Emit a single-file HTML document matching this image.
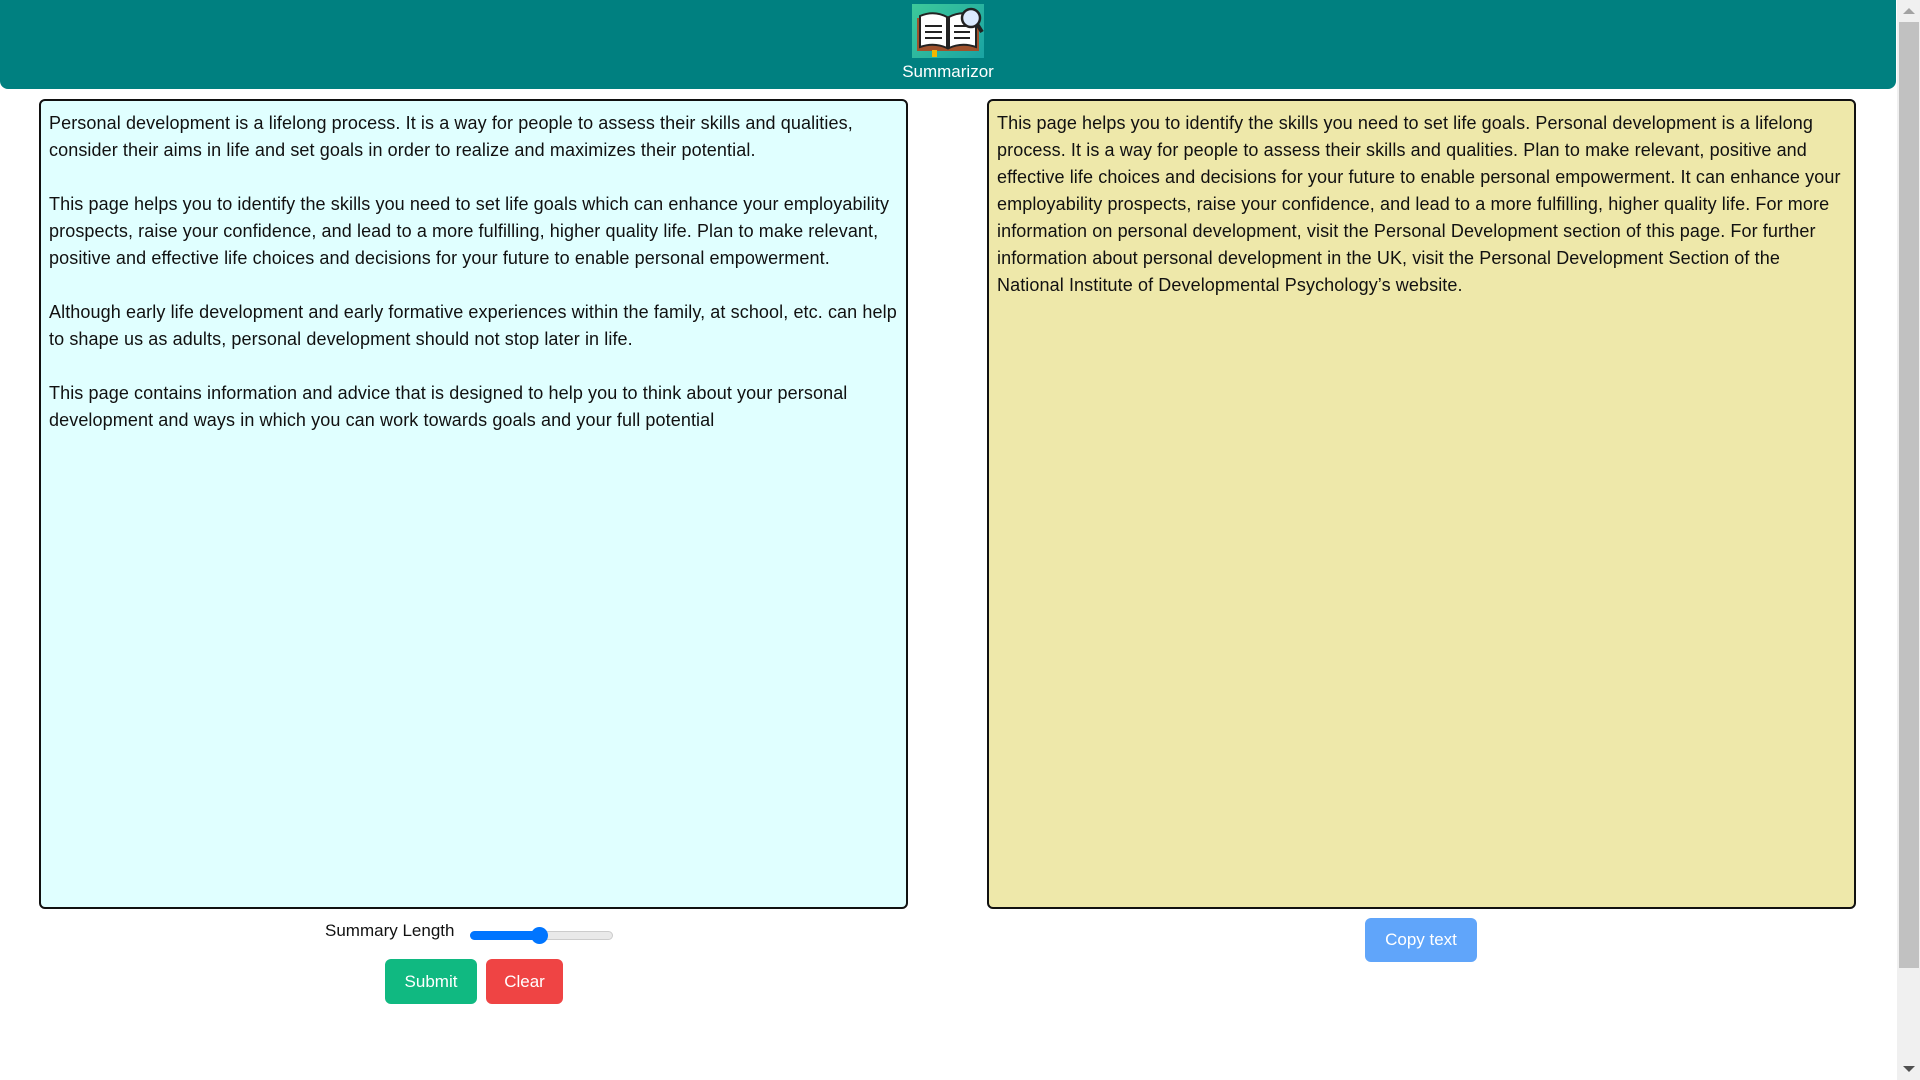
<!DOCTYPE html>
<html><head><meta charset="utf-8"><style>
html,body{margin:0;padding:0;width:1920px;height:1080px;overflow:hidden;background:#fff;font-family:"Liberation Sans",sans-serif}
.sb{position:absolute;right:0;top:0;width:23px;height:1080px;background:#f0f0f0}
.sb .th{position:absolute;left:2px;right:1px;top:22px;height:946px;background:#c1c1c1}
.sb .up,.sb .dn{position:absolute;left:6px;width:0;height:0;border-left:6px solid transparent;border-right:6px solid transparent}
.sb .up{top:8px;border-bottom:6px solid #a3a3a3}
.sb .dn{bottom:8px;border-top:6px solid #505050}
header{position:absolute;left:0;top:0;width:1896px;height:89px;background:#008080;border-radius:0 0 8px 8px}
.logo{position:absolute;left:912px;top:4px;width:72px;height:54px;background:linear-gradient(135deg,#3dc99a,#1aa3a3)}
.title{position:absolute;left:0;width:1896px;top:62px;text-align:center;color:#fff;font-size:17px}
.ta{position:absolute;box-sizing:border-box;border:2px solid #111;border-radius:6px;padding:9px 8px;font-size:18px;line-height:27px;color:#111;letter-spacing:0.1px}
.ta p{margin:0 0 27px 0}
#l{left:39px;top:99px;width:869px;height:810px;background:#e0ffff}
#r{left:987px;top:99px;width:869px;height:810px;background:#eee8aa}
.lbl{position:absolute;left:325px;top:921px;font-size:17px;color:#111}
.track{position:absolute;left:470px;top:931px;width:143px;height:9px;border-radius:5px;background:#e9e9e9;border:1px solid #ccc;box-sizing:border-box}
.fill{position:absolute;left:470px;top:931px;width:72px;height:9px;border-radius:5px;background:#0075ff}
.knob{position:absolute;left:531px;top:927px;width:17px;height:17px;border-radius:50%;background:#0075ff}
.btn{position:absolute;color:#fff;font-size:17px;text-align:center;border-radius:6px}
</style></head><body>
<header>
<div class="logo"><svg width="72" height="54" viewBox="0 0 72 54">
<path d="M5 14 H36 V47 H5 Z" fill="#a0522d"/><path d="M36 14 H67 V47 H36Z" fill="#a0522d"/>
<path d="M8 12 Q22 6 35 13 V44 Q22 38 8 43 Z" fill="#fff" stroke="#222" stroke-width="2"/>
<path d="M64 12 Q50 6 37 13 V44 Q50 38 64 43 Z" fill="#fff" stroke="#222" stroke-width="2"/>
<path d="M13 22H30M13 28H30M13 34H30M42 22H58M42 28H58M42 34H58" stroke="#222" stroke-width="2"/>
<rect x="20" y="46" width="5" height="7" fill="#f5b800"/>
<circle cx="59" cy="14" r="9" fill="#dbeafe" stroke="#222" stroke-width="2.5"/>
<path d="M65 20 L70 28" stroke="#222" stroke-width="4"/>
</svg></div>
<div class="title">Summarizor</div>
</header>
<div class="ta" id="l"><p>Personal development is a lifelong process. It is a way for people to assess their skills and qualities, consider their aims in life and set goals in order to realize and maximizes their potential.</p><p>This page helps you to identify the skills you need to set life goals which can enhance your employability prospects, raise your confidence, and lead to a more fulfilling, higher quality life. Plan to make relevant, positive and effective life choices and decisions for your future to enable personal empowerment.</p><p>Although early life development and early formative experiences within the family, at school, etc. can help to shape us as adults, personal development should not stop later in life.</p><p>This page contains information and advice that is designed to help you to think about your personal development and ways in which you can work towards goals and your full potential</p></div>
<div class="ta" id="r">This page helps you to identify the skills you need to set life goals. Personal development is a lifelong process. It is a way for people to assess their skills and qualities. Plan to make relevant, positive and effective life choices and decisions for your future to enable personal empowerment. It can enhance your employability prospects, raise your confidence, and lead to a more fulfilling, higher quality life. For more information on personal development, visit the Personal Development section of this page. For further information about personal development in the UK, visit the Personal Development Section of the National Institute of Developmental Psychology’s website.</div>
<div class="lbl">Summary Length</div>
<div class="track"></div><div class="fill"></div><div class="knob"></div>
<div class="btn" style="left:385px;top:959px;width:92px;height:45px;line-height:45px;background:#10b981">Submit</div>
<div class="btn" style="left:486px;top:959px;width:77px;height:45px;line-height:45px;background:#ef4444">Clear</div>
<div class="btn" style="left:1365px;top:918px;width:112px;height:44px;line-height:44px;background:#60a5fa">Copy text</div>
<div class="sb"><div class="up"></div><div class="th"></div><div class="dn"></div></div>
</body></html>
